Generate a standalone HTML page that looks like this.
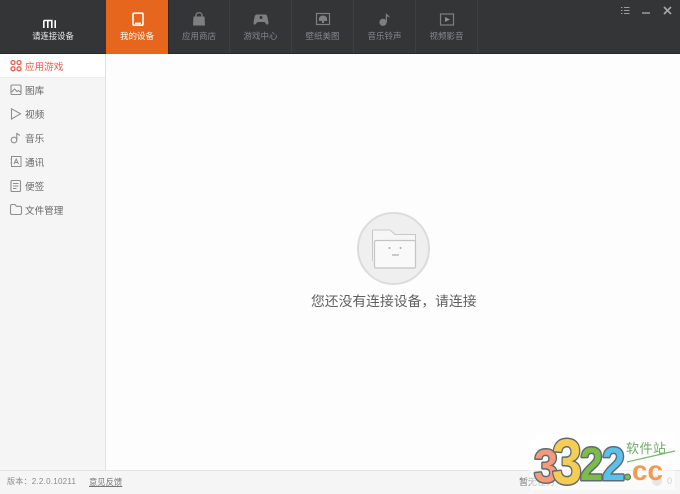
<!DOCTYPE html>
<html lang="zh"><head><meta charset="utf-8"><style>
*{box-sizing:border-box}
html,body{margin:0;padding:0;width:680px;height:494px;overflow:hidden;background:#fdfdfd;font-family:"Liberation Sans","Noto Sans CJK SC",sans-serif}
.a{position:absolute}
.t{position:absolute;white-space:nowrap;line-height:14px}
.tab{position:absolute;top:0;width:62px;height:53px;border-left:1px solid #3d3f41}
.tab span{position:absolute;left:0;right:0;top:29px;text-align:center;font-size:8.5px;line-height:14px;color:#85878a}
.tab svg{position:absolute;left:18px;top:10px}
.it{position:absolute;left:25px;font-size:9.6px;line-height:14px;color:#666;white-space:nowrap}
svg.ic{position:absolute;left:9px}
</style></head><body>
<div class="a" style="left:0;top:0;width:680px;height:54px;background:#333537;border-bottom:1px solid #26282a"></div>
<div class="a" style="left:43px;top:16px;width:14px;height:10px"><svg width="14" height="10"><path d="M0.8 1.500H8.800V9M0.800 1.500V9M4.800 1.500V9M12.200 1.200V9" stroke="#fff" stroke-width="1.600" fill="none"/></svg></div>
<div class="t" style="left:0;width:106px;top:29px;text-align:center;font-size:8.3px;color:#f1f1f1">请连接设备</div>
<div class="a" style="left:106px;top:0;width:62px;height:54px;background:#e5661c"></div>
<div class="a" style="left:106px;top:0;width:62px;height:54px"><svg class="a" style="left:26px;top:12px" width="12" height="14"><rect x="1" y="1.200" width="10" height="12" rx="1" fill="none" stroke="#fff" stroke-width="1.600"/><rect x="3" y="10.600" width="6" height="1.600" fill="#fff"/></svg><div class="t" style="left:0;width:62px;top:29px;text-align:center;font-size:8.5px;color:#fff">我的设备</div></div>

<div class="tab" style="left:168px;width:61px;border-left-color:#2a2c2e"><svg style="left:17px" width="26" height="18"><path d="M7.500 6.500H18.500L19 15.500H7Z" fill="#7d7f81"/><path d="M10 7V5C10 2 16 2 16 5V7" stroke="#7d7f81" stroke-width="1.300" fill="none"/></svg><span>应用商店</span></div>
<div class="tab" style="left:229px"><svg width="26" height="18"><path d="M8.500 4.500H17.500C19.500 4.500 20 10 20.500 13C20.500 15 18.800 15 18 13.800L16.500 12H9.500L8 13.800C7.200 15 5.500 15 5.500 13C6 10 6.500 4.500 8.500 4.500Z" fill="#7d7f81"/><circle cx="13" cy="7.500" r="1.500" fill="#333537"/></svg><span>游戏中心</span></div>
<div class="tab" style="left:291px"><svg width="26" height="18"><rect x="6.500" y="3.500" width="13" height="11" fill="#333537" stroke="#7d7f81" stroke-width="1.200"/><path d="M9 11C8 7 11 5.500 13 5.500C15 5.500 18 7 17 11H14V13H12V11Z" fill="#7d7f81"/></svg><span>壁纸美图</span></div>
<div class="tab" style="left:353px"><svg width="26" height="18"><circle cx="11" cy="12.300" r="3.600" fill="#7d7f81"/><path d="M13.800 12.300V2.500C14.500 5 18 5 17.500 8C16.500 6.500 15.500 6.500 15 6.500V12.300Z" fill="#7d7f81"/></svg><span>音乐铃声</span></div>
<div class="tab" style="left:415px;width:63px;border-right:1px solid #3d3f41"><svg width="26" height="18"><rect x="6.500" y="4" width="13" height="11" fill="none" stroke="#7d7f81" stroke-width="1.200"/><path d="M11 7L16 9.500L11 12Z" fill="#8a8c8e"/></svg><span>视频影音</span></div>

<svg class="a" style="left:620px;top:6px" width="52" height="10"><path d="M1 1.500H2.500M1 4.500H2.500M1 7.500H2.500M4 1.500H9.500M4 4.500H9.500M4 7.500H9.500" stroke="#9a9c9e" stroke-width="1"/><path d="M22 7H30" stroke="#9a9c9e" stroke-width="1.500"/><path d="M44 1L51 8M51 1L44 8" stroke="#a4a6a8" stroke-width="1.600"/></svg>

<div class="a" style="left:0;top:54px;width:106px;height:416px;background:#f5f5f5;border-right:1px solid #e2e2e2"></div>
<div class="a" style="left:0;top:54px;width:105px;height:24px;background:#fff;border-bottom:1px solid #ececec"></div>

<svg class="ic" style="top:59px" width="14" height="14" fill="none" stroke="#f0574a" stroke-width="1.300"><circle cx="4" cy="3.500" r="2"/><circle cx="10" cy="3.500" r="2"/><circle cx="4" cy="9.800" r="2"/><circle cx="10" cy="9.800" r="2"/></svg>
<div class="it" style="top:61px;color:#ee5a4c">应用游戏</div>
<svg class="ic" style="top:83px" width="14" height="14" fill="none" stroke="#8e8e8e" stroke-width="1.100"><rect x="2" y="2" width="10" height="9.500" rx="1"/><path d="M2.500 9L5.500 6L8 8.500L9.500 7.500L12 9.500"/></svg>
<div class="it" style="top:85px">图库</div>
<svg class="ic" style="top:107px" width="14" height="14" fill="none" stroke="#8e8e8e" stroke-width="1.100"><path d="M2.500 1.800L11.500 6.800L2.500 12Z"/></svg>
<div class="it" style="top:109px">视频</div>
<svg class="ic" style="top:131px" width="14" height="14" fill="none" stroke="#8e8e8e" stroke-width="1.100"><circle cx="5" cy="9" r="2.800"/><path d="M7.800 9V2C8.500 3.500 10 3.500 10.800 4.500"/></svg>
<div class="it" style="top:133px">音乐</div>
<svg class="ic" style="top:155px" width="14" height="14" fill="none" stroke="#8e8e8e" stroke-width="1"><rect x="2.500" y="1.500" width="9.500" height="10"/><path d="M5 9L7.200 4L9.500 9M5.800 7.500H8.700M1.500 4H3M1.500 8H3"/></svg>
<div class="it" style="top:157px">通讯</div>
<svg class="ic" style="top:179px" width="14" height="14" fill="none" stroke="#8e8e8e" stroke-width="1.100"><rect x="2" y="1.500" width="9.500" height="11" rx="1"/><path d="M4 4.500H9.500M4 7H9.500M4 9.500H7.500"/></svg>
<div class="it" style="top:181px">便签</div>
<svg class="ic" style="top:203px" width="14" height="14" fill="none" stroke="#8e8e8e" stroke-width="1.100"><path d="M1.500 3C1.500 2 2 1.500 3 1.500H6L7.500 3.300H11C12 3.300 12.500 3.800 12.500 4.800V10C12.500 11 12 11.500 11 11.500H3C2 11.500 1.500 11 1.500 10Z"/></svg>
<div class="it" style="top:205px">文件管理</div>

<svg class="a" style="left:356px;top:211px" width="76" height="76"><circle cx="37.500" cy="37.500" r="35.500" fill="#efefef" stroke="#dcdcdc" stroke-width="2"/><path d="M16.500 50V20C16.500 19.500 17 19 17.500 19H34L39 23.500H59.500V30" fill="#f6f6f6" stroke="#c8c8c8" stroke-width="1"/><rect x="18.500" y="29.500" width="41" height="27.500" rx="1.500" fill="#f9f9f9" stroke="#c4c4c4" stroke-width="1.200"/><circle cx="33.500" cy="37" r="1" fill="#aaa"/><circle cx="44.500" cy="37" r="1" fill="#aaa"/><path d="M36 44H43" stroke="#aaa" stroke-width="1.200"/></svg>
<div class="t" style="left:311px;top:295px;font-size:13.800px;color:#606060;letter-spacing:0">您还没有连接设备，请连接</div>

<div class="a" style="left:0;top:470px;width:680px;height:24px;background:#f5f5f5;border-top:1px solid #e4e4e4"></div>
<div class="t" style="left:7px;top:475px;font-size:8px;color:#8a8a8a;letter-spacing:.25px">版本：2.2.0.10211</div>
<div class="t" style="left:89px;top:475px;font-size:8.300px;color:#777;text-decoration:underline">意见反馈</div>
<div class="t" style="left:519px;top:475px;font-size:9px;color:#777">暂无任务</div>
<div class="a" style="left:652px;top:476px;width:10px;height:10px;border-radius:50%;background:#ccc"></div>
<div class="t" style="left:667px;top:474px;font-size:9px;color:#999">0</div>

<div class="a" style="left:530px;top:434px;width:145px;height:56px;background:rgba(255,255,255,.5)"></div>
<svg class="a" style="left:0;top:0;overflow:visible" width="680" height="494">
<g font-family="Liberation Sans,sans-serif" font-weight="700" stroke="#5d6a70" stroke-width="3" paint-order="stroke" stroke-linejoin="round">
<text x="534" y="482" font-size="46" textLength="24" lengthAdjust="spacingAndGlyphs" fill="#f79a7c">3</text>
<text x="580" y="480" font-size="46" textLength="23" lengthAdjust="spacingAndGlyphs" fill="#7dbb4a">2</text>
<text x="602" y="480" font-size="46" textLength="23" lengthAdjust="spacingAndGlyphs" fill="#5cc0ec">2</text>
<text x="552" y="484" font-size="64" textLength="30" lengthAdjust="spacingAndGlyphs" fill="#f6cd54">3</text>
</g>
<circle cx="627.500" cy="477" r="3" fill="#7dbb4a" stroke="#5d6a70"/>
<text x="632" y="480" font-family="Liberation Sans,sans-serif" font-weight="700" font-size="28" textLength="31" lengthAdjust="spacingAndGlyphs" fill="#f49a50">cc</text>
<text x="626" y="453" font-family="Liberation Sans,'Noto Sans CJK SC',sans-serif" font-size="13" textLength="40" fill="#6cab62">软件站</text>
<path d="M627 462L675 451" stroke="#77b86c" stroke-width="1.200"/>
</svg>
</body></html>
